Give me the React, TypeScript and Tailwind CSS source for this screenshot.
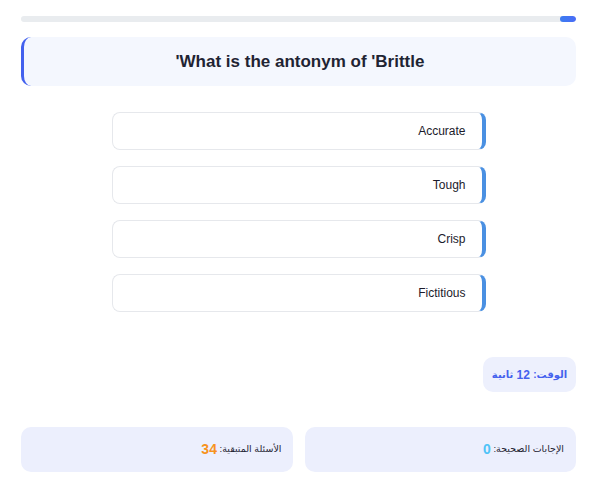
import React from "react";

const options = ["Accurate", "Tough", "Crisp", "Fictitious"];

export default function App() {
  return (
    <div
      dir="rtl"
      className="bg-white w-[591px] h-[495px] pl-[21px] pr-[15px] pt-[16px]"
      style={{ fontFamily: '"Liberation Sans", "DejaVu Sans", Arial, sans-serif' }}
    >
      <div className="h-[6px] w-full rounded-full bg-[#e9ecef] overflow-hidden">
        <div className="h-full w-[16px] rounded-full bg-gradient-to-l from-[#4a6cf7] to-[#3b7cf0]" />
      </div>

      <div className="mt-[15px] h-[49px] rounded-[10px] bg-[#f4f7fe] border-l-[3px] border-[#4361ee] flex items-center justify-center">
        <h2 className="text-[17px] font-bold text-[#1f2433]">What is the antonym of 'Brittle'</h2>
      </div>

      <div className="mt-[26px] flex flex-col items-center gap-[16px]">
        {options.map((o) => (
          <div
            key={o}
            className="w-[374px] h-[38px] rounded-[8px] border border-[#e6e8ec] border-r-[4px] border-r-[#4a90e2] bg-white flex items-center pr-[16px] text-[12px] text-[#1b1b2b]"
          >
            {o}
          </div>
        ))}
      </div>

      <div className="mt-[45px] flex">
        <div className="h-[35px] w-[93px] rounded-[10px] bg-[#edf0fd] flex items-center justify-center font-bold text-[#4361ee]">
          <span className="text-[10px]">الوقت:</span>
          <span className="text-[12px]">&nbsp;12&nbsp;</span>
          <span className="text-[10px]">ثانية</span>
        </div>
      </div>

      <div className="mt-[35px] grid grid-cols-2 gap-[12px]">
        <div className="h-[45px] rounded-[10px] bg-[#eceffd] flex items-center pr-[12px] text-[9.5px] text-[#1f2433]">
          الإجابات الصحيحة:&nbsp;<span className="text-[14px] font-bold text-[#4fc3f7]">0</span>
        </div>
        <div className="h-[45px] rounded-[10px] bg-[#eceffd] flex items-center pr-[11px] text-[9.5px] text-[#1f2433]">
          الأسئلة المتبقية:&nbsp;<span className="text-[14px] font-bold text-[#f7931e]">34</span>
        </div>
      </div>
    </div>
  );
}
